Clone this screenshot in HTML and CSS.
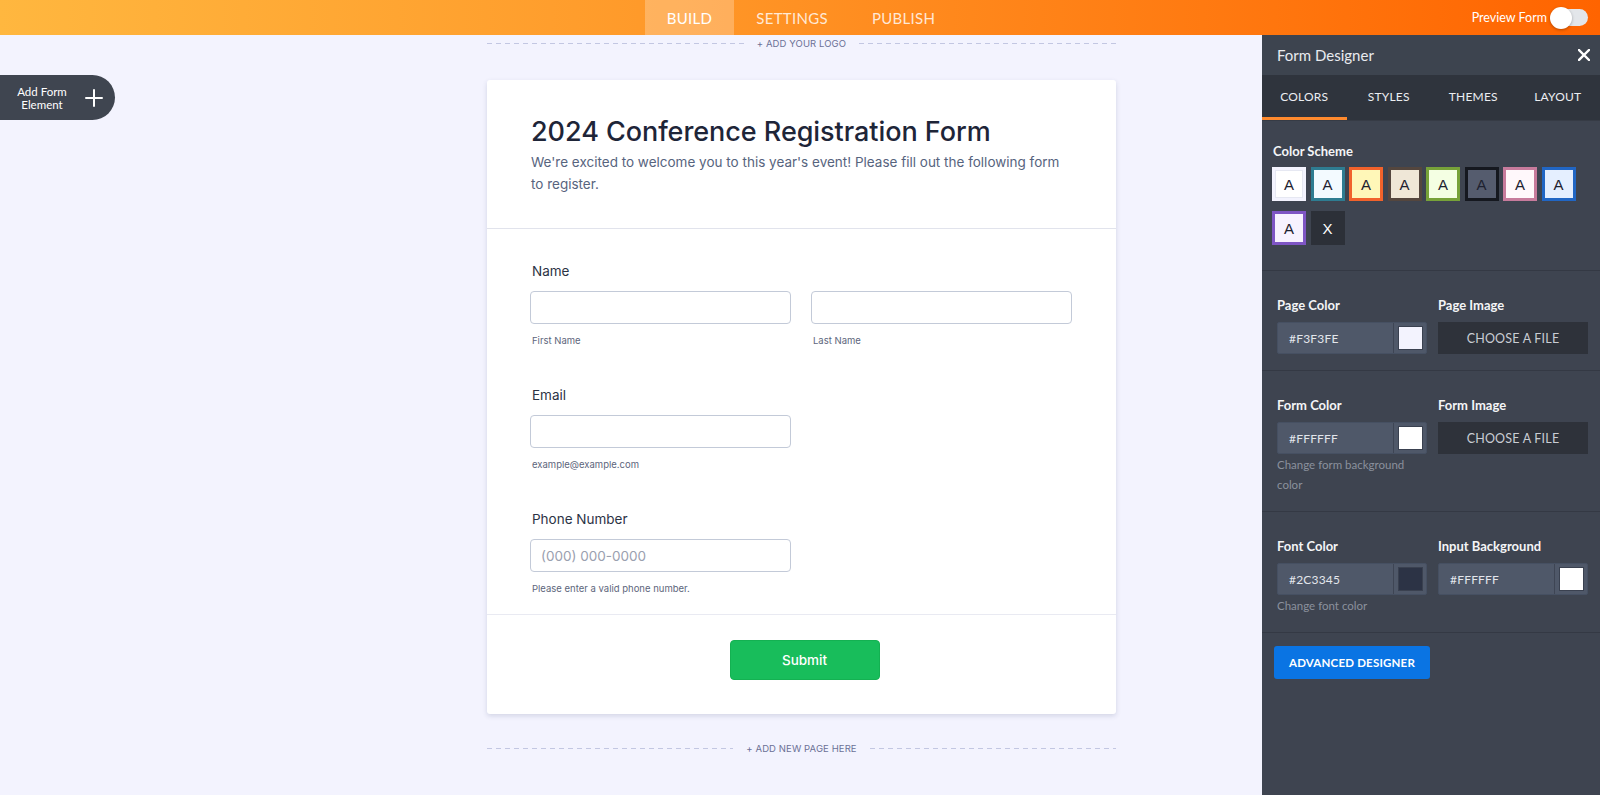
FILE: index.html
```html
<!DOCTYPE html>
<html lang="en">
<head>
<meta charset="utf-8">
<title>Form Builder</title>
<link rel="stylesheet" href="styles.css">
</head>
<body>
<header class="topbar">
  <div class="topbar-side"></div>
  <nav class="main-nav">
    <a class="nav-item active">BUILD</a>
    <a class="nav-item">SETTINGS</a>
    <a class="nav-item">PUBLISH</a>
  </nav>
  <div class="topbar-side right">
    <span class="preview-label">Preview Form</span>
    <span class="toggle"><span class="knob"></span></span>
  </div>
</header>

<div class="workspace">
  <main class="canvas">
    <button class="add-element">
      <span class="add-text">Add Form<br>Element</span>
      <svg class="add-plus" width="18" height="18" viewBox="0 0 18 18"><path d="M9 1v16M1 9h16" stroke="#fff" stroke-width="2" stroke-linecap="round"/></svg>
    </button>

    <div class="column">
      <div class="dash-row top">
        <span class="dash"></span>
        <span class="dash-text">+ ADD YOUR LOGO</span>
        <span class="dash"></span>
      </div>

      <section class="card">
        <div class="card-head">
          <h1 class="form-title">2024 Conference Registration Form</h1>
          <p class="form-desc">We're excited to welcome you to this year's event! Please fill out the following form to register.</p>
        </div>

        <div class="card-fields">
          <div class="field">
            <label class="field-label">Name</label>
            <div class="two-col">
              <div>
                <div class="input"></div>
                <div class="sublabel">First Name</div>
              </div>
              <div>
                <div class="input"></div>
                <div class="sublabel">Last Name</div>
              </div>
            </div>
          </div>

          <div class="field">
            <label class="field-label">Email</label>
            <div class="two-col">
              <div>
                <div class="input"></div>
                <div class="sublabel">example@example.com</div>
              </div>
            </div>
          </div>

          <div class="field">
            <label class="field-label">Phone Number</label>
            <div class="two-col">
              <div>
                <div class="input placeholder">(000) 000-0000</div>
                <div class="sublabel">Please enter a valid phone number.</div>
              </div>
            </div>
          </div>
        </div>

        <div class="card-submit">
          <button class="submit">Submit</button>
        </div>
      </section>

      <div class="dash-row bottom">
        <span class="dash"></span>
        <span class="dash-text">+ ADD NEW PAGE HERE</span>
        <span class="dash"></span>
      </div>
    </div>
  </main>

  <aside class="sidebar">
    <div class="sb-head">
      <span class="sb-title">Form Designer</span>
      <svg class="sb-close" width="12" height="12" viewBox="0 0 12 12"><path d="M1 1l10 10M11 1L1 11" stroke="#fff" stroke-width="2.4" stroke-linecap="square"/></svg>
    </div>
    <div class="sb-tabs">
      <span class="sb-tab active">COLORS</span>
      <span class="sb-tab">STYLES</span>
      <span class="sb-tab">THEMES</span>
      <span class="sb-tab">LAYOUT</span>
    </div>

    <div class="sb-section scheme">
      <div class="sb-label">Color Scheme</div>
      <div class="swatches">
        <span class="sw sw1">A</span>
        <span class="sw sw2">A</span>
        <span class="sw sw3">A</span>
        <span class="sw sw4">A</span>
        <span class="sw sw5">A</span>
        <span class="sw sw6">A</span>
        <span class="sw sw7">A</span>
        <span class="sw sw8">A</span>
        <span class="sw sw9">A</span>
        <span class="sw sw10">X</span>
      </div>
    </div>

    <div class="sb-section">
      <div class="sb-grid">
        <div>
          <div class="sb-label">Page Color</div>
          <div class="color-input"><span class="ci-val">#F3F3FE</span><span class="ci-swatch"><span class="ci-chip chip-page"></span></span></div>
        </div>
        <div>
          <div class="sb-label">Page Image</div>
          <div class="file-btn">CHOOSE A FILE</div>
        </div>
      </div>
    </div>

    <div class="sb-section">
      <div class="sb-grid">
        <div>
          <div class="sb-label">Form Color</div>
          <div class="color-input"><span class="ci-val">#FFFFFF</span><span class="ci-swatch"><span class="ci-chip chip-white"></span></span></div>
          <div class="sb-help">Change form background color</div>
        </div>
        <div>
          <div class="sb-label">Form Image</div>
          <div class="file-btn">CHOOSE A FILE</div>
        </div>
      </div>
    </div>

    <div class="sb-section">
      <div class="sb-grid">
        <div>
          <div class="sb-label">Font Color</div>
          <div class="color-input"><span class="ci-val">#2C3345</span><span class="ci-swatch"><span class="ci-chip chip-dark"></span></span></div>
          <div class="sb-help">Change font color</div>
        </div>
        <div>
          <div class="sb-label">Input Background</div>
          <div class="color-input"><span class="ci-val">#FFFFFF</span><span class="ci-swatch"><span class="ci-chip chip-white"></span></span></div>
        </div>
      </div>
    </div>

    <div class="sb-adv">
      <button class="adv-btn">ADVANCED DESIGNER</button>
    </div>
  </aside>
</div>
</body>
</html>
```

FILE: styles.css
```css
* { box-sizing: border-box; }
html, body { margin: 0; padding: 0; }
body {
  width: 1600px;
  height: 795px;
  overflow: hidden;
  background: #F3F3FE;
  font-family: "Inter", "Liberation Sans", sans-serif;
}

/* Top bar */
.topbar {
  height: 35px;
  display: grid;
  grid-template-columns: 1fr auto 1fr;
  align-items: stretch;
  background: linear-gradient(90deg, #FFB73F 0%, #FF9A2A 40%, #FF8318 65%, #FF6400 100%);
}
.main-nav { display: flex; margin-left: 2px; }
.nav-item {
  display: flex;
  align-items: center;
  padding: 0 22px;
  font-family: "Lato", "Inter", sans-serif;
  font-size: 15px;
  letter-spacing: 0.3px;
  color: rgba(255, 255, 255, 0.82);
}
.nav-item.active {
  color: #fff;
  background: rgba(255, 255, 255, 0.25);
}
.topbar-side.right {
  display: flex;
  justify-content: flex-end;
  align-items: center;
  padding-right: 12px;
  gap: 4px;
}
.preview-label {
  font-family: "Lato", sans-serif;
  font-size: 12.5px;
  color: #fff;
}
.toggle {
  width: 37px;
  height: 17px;
  border-radius: 9px;
  background: #E3E6EA;
  display: flex;
  align-items: center;
}
.knob {
  width: 22px;
  height: 22px;
  flex: none;
  border-radius: 50%;
  background: #fff;
  box-shadow: 0 1px 3px rgba(0, 0, 0, 0.3);
  margin-left: -1px;
}

/* Workspace */
.workspace {
  display: flex;
  height: 760px;
}
.canvas {
  flex: 1;
  position: relative;
  padding-left: 487px;
}
.column { width: 629px; }

.add-element {
  position: absolute;
  left: 0;
  top: 40px;
  width: 115px;
  height: 45px;
  border: 0;
  border-radius: 0 23px 23px 0;
  background: #3F4550;
  display: flex;
  align-items: center;
  padding: 0 0 0 14px;
  color: #fff;
  font-family: "Lato", sans-serif;
  cursor: pointer;
}
.add-text {
  font-size: 11.5px;
  line-height: 13px;
  text-align: center;
  width: 56px;
}
.add-plus { margin-left: 15px; }

.dash-row {
  display: flex;
  align-items: center;
  height: 16px;
}
.dash-row.top { margin-top: 0; }
.dash-row.bottom { margin-top: 26px; }
.dash {
  flex: 1;
  height: 1px;
  background: repeating-linear-gradient(90deg, #C3C7E2 0 5px, transparent 5px 9px);
}
.dash-text {
  font-size: 9.5px;
  color: #6C7196;
  margin: 0 13px;
  letter-spacing: 0.1px;
}

/* Card */
.card {
  margin-top: 29px;
  background: #fff;
  border-radius: 3px;
  box-shadow: 0 2px 5px rgba(42, 54, 100, 0.16);
}
.card-head {
  padding: 36px 44px 33px 44px;
  border-bottom: 1px solid #E1E3EC;
}
.form-title {
  margin: 0;
  font-size: 27px;
  line-height: 32px;
  font-weight: 500;
  color: #1E2538;
  letter-spacing: -0.05px;
}
.form-desc {
  margin: 3px 0 0;
  font-size: 13.5px;
  line-height: 22px;
  color: #57647E;
  width: 535px;
}
.card-fields {
  padding: 32px 44px 18px 43px;
  border-bottom: 1px solid #E9EAF2;
}
.field + .field { margin-top: 37px; }
.field-label {
  display: block;
  padding-left: 2px;
  font-size: 13.5px;
  line-height: 20px;
  color: #2C3345;
}
.two-col {
  display: grid;
  grid-template-columns: 1fr 1fr;
  gap: 20px;
  margin-top: 10px;
}
.input {
  height: 33px;
  border: 1px solid #C3CAD8;
  border-radius: 4px;
  background: #fff;
}
.input.placeholder {
  display: flex;
  align-items: center;
  padding-left: 10px;
  font-size: 13.5px;
  color: #9AA0AF;
}
.sublabel {
  margin-top: 10px;
  padding-left: 2px;
  font-size: 9.5px;
  line-height: 14px;
  color: #5D667C;
}
.card-submit {
  display: flex;
  justify-content: center;
  padding: 25px 0 34px 6px;
}
.submit {
  width: 150px;
  height: 40px;
  border: 1px solid #14B152;
  border-radius: 4px;
  background: #18BD5B;
  color: #fff;
  font-family: "Inter", sans-serif;
  font-size: 13.5px;
  font-weight: 500;
}

/* Sidebar */
.sidebar {
  width: 338px;
  background: #3E4450;
  font-family: "Lato", "Inter", sans-serif;
  color: #fff;
}
.sb-head {
  height: 40px;
  display: flex;
  align-items: center;
  justify-content: space-between;
  padding: 0 10px 0 15px;
  background: #3D444F;
}
.sb-title {
  font-size: 15px;
  color: #E9EBEF;
}
.sb-tabs {
  display: grid;
  grid-template-columns: repeat(4, 1fr);
  height: 46px;
  background: #2F343D;
  border-bottom: 1px solid #363B45;
}
.sb-tab {
  display: flex;
  align-items: center;
  justify-content: center;
  font-size: 12px;
  color: #ECEEF2;
  letter-spacing: 0.2px;
  border-bottom: 3px solid transparent;
  padding-top: 1px;
}
.sb-tab.active { border-bottom-color: #FF8A2E; }

.sb-section {
  padding: 25px 12px 16px 15px;
  border-bottom: 1px solid #343944;
}
.sb-section.scheme {
  padding: 21px 10px 25px 10px;
}
.sb-label {
  font-size: 13px;
  font-weight: 700;
  line-height: 18px;
  color: #F4F5F7;
  margin-bottom: 8px;
}
.scheme .sb-label { margin-bottom: 7px; padding-left: 1px; }
.swatches {
  display: flex;
  flex-wrap: wrap;
  column-gap: 4.5px;
  row-gap: 10px;
  width: 310px;
}
.sw {
  width: 34px;
  height: 34px;
  display: flex;
  align-items: center;
  justify-content: center;
  border: 3px solid;
  font-family: "Liberation Sans", sans-serif;
  font-size: 15px;
  color: #1E2230;
}
.sw1 { background: #fff; border-color: #F3F3FE; box-shadow: inset 0 0 0 1px #E6E8F2; }
.sw2 { background: #F3FAFF; border-color: #2E7C91; }
.sw3 { background: #FFF7B8; border-color: #F1622B; }
.sw4 { background: #EFE7D7; border-color: #54463E; }
.sw5 { background: #F4FFE3; border-color: #77A239; }
.sw6 { background: #555C6E; border-color: #15181F; }
.sw7 { background: #FFF8FB; border-color: #C77B9C; }
.sw8 { background: #E5EFFF; border-color: #2166C4; }
.sw9 { background: #F7F2FF; border-color: #7E55C4; }
.sw10 { background: #2C3038; border-color: #2C3038; color: #fff; }

.sb-grid {
  display: grid;
  grid-template-columns: 150px 150px;
  column-gap: 11px;
}
.color-input {
  height: 32px;
  display: flex;
  background: #4F5869;
  border: 1px solid #465062;
  border-radius: 2px;
}
.ci-val {
  flex: 1;
  display: flex;
  align-items: center;
  padding-left: 11px;
  font-size: 12px;
  color: #E3E6EC;
  letter-spacing: 0.2px;
}
.ci-swatch {
  width: 33px;
  display: flex;
  align-items: center;
  justify-content: center;
  border-left: 1px solid #3E4554;
}
.ci-chip {
  width: 25px;
  height: 24px;
  border: 1px solid #3A4150;
}
.chip-page { background: #F3F3FE; }
.chip-white { background: #FFFFFF; }
.chip-dark { background: #2C3345; }
.file-btn {
  height: 32px;
  display: flex;
  align-items: center;
  justify-content: center;
  background: #2E323A;
  font-size: 12.5px;
  color: #C9CDD4;
  letter-spacing: 0.2px;
}
.sb-help {
  margin-top: 1px;
  font-size: 11.5px;
  line-height: 20px;
  color: #8B919D;
}
.sb-adv { padding: 13px 12px; }
.adv-btn {
  width: 156px;
  height: 33px;
  border: 0;
  border-radius: 3px;
  background: #0A74E3;
  color: #fff;
  font-family: "Lato", sans-serif;
  font-weight: 700;
  font-size: 11.5px;
  letter-spacing: 0.2px;
}
```
